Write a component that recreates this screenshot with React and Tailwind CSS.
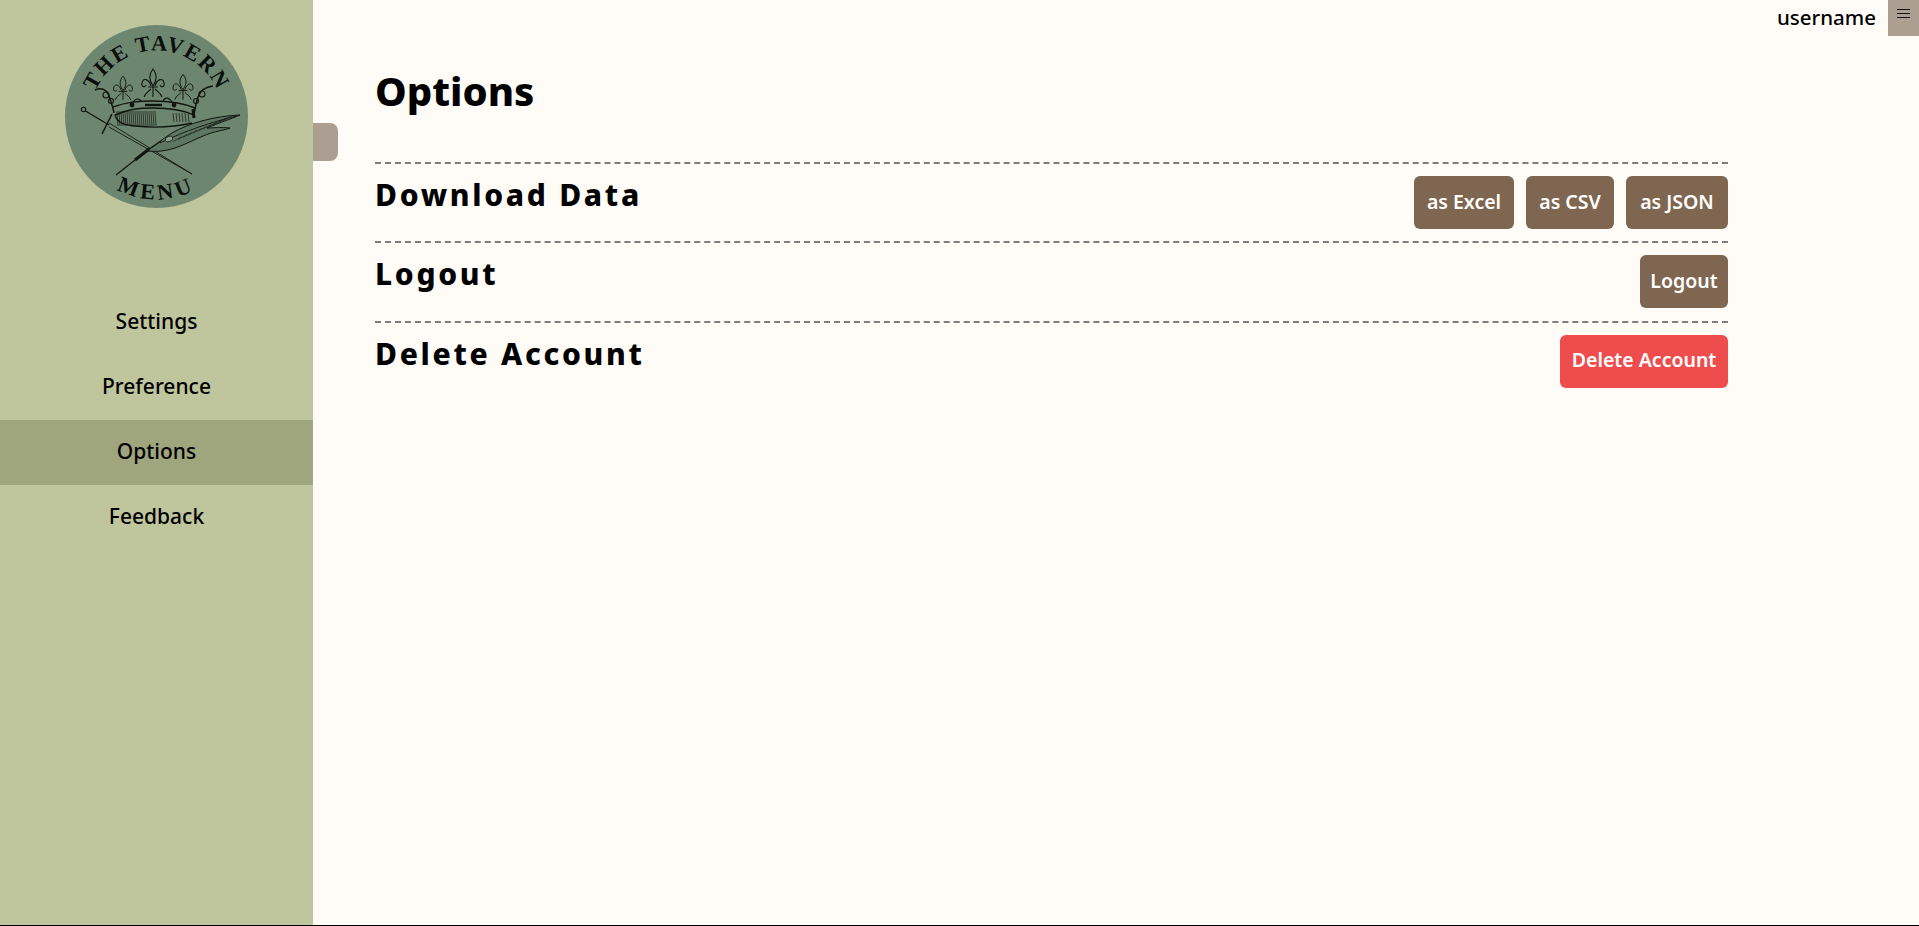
const navItems = ["Settings", "Preference", "Options", "Feedback"];

const sections = [
    {
        title: "Download Data",
        buttons: [
            { label: "as Excel", width: "w-[100px]" },
            { label: "as CSV", width: "w-[88px]" },
            { label: "as JSON", width: "w-[102px]" },
        ],
    },
    { title: "Logout", buttons: [{ label: "Logout", width: "w-[88px]" }] },
    { title: "Delete Account", buttons: [{ label: "Delete Account", width: "w-[168px]" }], danger: true },
];

// x positions of the hatch lines under the crown
const capHatch = [52, 54, 56, 58, 60, 62, 64, 66, 68, 70, 72, 74, 76, 78, 80, 82, 84, 86, 88, 90, 108, 111, 114, 117, 120, 123];
const featherHatch = [108, 113, 118, 123, 128, 133, 138, 143, 148, 153, 158];

function Fleur({ x, y, scale = 1 }) {
    return (
        <g transform={`translate(${x} ${y}) scale(${scale})`}>
            <path d="M0 -14 C4 -9 5 -4 0 3 C-5 -4 -4 -9 0 -14 Z" />
            <path d="M-2 3 C-4 -4 -10 -6 -11 0 C-12 4 -8 5 -7 2" />
            <path d="M2 3 C4 -4 10 -6 11 0 C12 4 8 5 7 2" />
            <path d="M-5 4 L5 4 M0 3 L0 14 M-2 6 C-5 9 -8 10 -9 14 M2 6 C5 9 8 10 9 14" />
        </g>
    );
}

function Logo() {
    return (
        <svg viewBox="0 0 183 183" className="w-[183px] h-[183px]">
            <defs>
                <path id="arc-top" d="M 25.5 91.5 A 66 66 0 0 1 157.5 91.5" />
                <path id="arc-bottom" d="M 8.5 91.5 A 83 83 0 0 0 174.5 91.5" />
            </defs>
            <circle cx="91.5" cy="91.5" r="91.5" fill="#6d8670" />
            <text fontFamily="'Liberation Serif', serif" fontWeight="700" fontSize="22" letterSpacing="1.5" fill="#0a0f0b">
                <textPath href="#arc-top" startOffset="50%" textAnchor="middle">THE TAVERN</textPath>
            </text>
            <text fontFamily="'Liberation Serif', serif" fontWeight="700" fontSize="22" letterSpacing="4" fill="#0a0f0b">
                <textPath href="#arc-bottom" startOffset="50%" textAnchor="middle">MENU</textPath>
            </text>

            {/* crown */}
            <g fill="none" stroke="#10160f" strokeWidth="1.1">
                <Fleur x={58} y={63} scale={0.85} />
                <Fleur x={88} y={58} />
                <Fleur x={118} y={62} scale={0.9} />
                <path d="M30 65 C37 62 42 65 44 71 C46 77 48 82 49 88" strokeWidth="1.5" />
                <path d="M148 61 C140 62 135 66 133 72 C131 78 130 84 129 90" strokeWidth="1.5" />
                <circle cx="41" cy="70" r="3" />
                <circle cx="46" cy="76" r="2.5" />
                <circle cx="137" cy="69" r="3" />
                <circle cx="131" cy="76" r="2.5" />
                <path d="M48 82 C62 77 72 76 88 76 C104 76 118 78 130 83" strokeWidth="1.4" />
                <path d="M50 90 C64 84 74 83 88 83 C104 83 118 85 129 90" strokeWidth="1.4" />
                <path d="M68 78 C70 73 74 73 76 76 M98 76 C100 72 104 72 107 77" />
                <path d="M50 90 C52 98 60 100 70 101 C90 103 110 102 127 98" strokeWidth="1.3" />
                {capHatch.map((x) => (
                    <path key={x} d={`M${x} ${x < 95 ? 86 : 88} L${x + 1} ${x < 95 ? 101 : 97}`} strokeWidth="0.7" />
                ))}
            </g>
            <circle cx="67" cy="80" r="2.4" fill="#10160f" />
            <circle cx="109" cy="80" r="2.4" fill="#10160f" />
            <path d="M80 80 L97 80" stroke="#10160f" strokeWidth="2.4" />
            <path d="M128 84 L129 93" stroke="#10160f" strokeWidth="3" />

            {/* sword */}
            <g fill="none" stroke="#10160f">
                <circle cx="18.5" cy="84.5" r="2.2" strokeWidth="1.1" />
                <path d="M20.5 86 L44 100" strokeWidth="1.4" />
                <path d="M44 98 L127 149 L44 102" strokeWidth="0.9" />
                <path d="M47 89 L37 109" strokeWidth="1.5" />
            </g>

            {/* feather */}
            <path d="M175 90 C150 91 124 98 107 108 C96 115 88 122 82 126 C92 127 100 126 110 123 C124 118 134 112 146 108 C152 106 160 105 165 103 C156 102 148 103 142 103 C153 98 166 94 175 90 Z" fill="#5e7762" stroke="#10160f" strokeWidth="1" />
            <g fill="none" stroke="#10160f" strokeWidth="0.6">
                <path d="M95 118 C120 106 146 97 172 91" strokeWidth="0.9" />
                {featherHatch.map((x) => (
                    <path key={x} d={`M${x} ${120 - (x - 100) * 0.42} L${x + 9} ${115 - (x - 100) * 0.42}`} />
                ))}
            </g>
            <ellipse cx="104" cy="114" rx="4" ry="2.5" fill="#86a08c" stroke="#10160f" strokeWidth="0.7" transform="rotate(-25 104 114)" />
            <path d="M51 150 L70 135" stroke="#10160f" strokeWidth="1.2" />
            <path d="M70 135 L84 124" stroke="#10160f" strokeWidth="3" />
            <path d="M84 124 L96 116" stroke="#10160f" strokeWidth="1.4" />
        </svg>
    );
}

function App() {
    return (
        <div className="h-[926px] flex flex-col bg-[#fffcf8] font-['Noto_Sans',sans-serif] text-black">
            <div className="flex-1 flex min-h-0">
                <aside className="w-[313px] shrink-0 bg-[#bfc69d] flex flex-col">
                    <div className="pt-[25px] flex justify-center">
                        <Logo />
                    </div>
                    <nav className="mt-[82px]">
                        {navItems.map((item) => (
                            <div
                                key={item}
                                className={`h-[65px] pb-[2px] flex items-center justify-center text-[21px] font-medium ${item === "Options" ? "bg-[#9fa57d]" : ""}`}
                            >
                                {item}
                            </div>
                        ))}
                    </nav>
                </aside>

                <div className="flex-1 relative">
                    {/* sidebar toggle */}
                    <div className="absolute left-0 top-[123px] w-[25px] h-[38px] bg-[#ac9e90] rounded-r-lg"></div>

                    <header className="flex justify-end items-start h-[36px]">
                        <span className="text-[20.5px] font-medium leading-[34px] mr-[12px]">username</span>
                        <button className="w-[31px] h-[36px] bg-[#ac9e90] flex justify-center pt-[9px]">
                            <svg width="13" height="9" viewBox="0 0 13 9" stroke="#111" strokeWidth="1">
                                <path d="M0 .5H13M0 4.5H13M0 8.5H13" />
                            </svg>
                        </button>
                    </header>

                    <main className="ml-[62px] w-[1353px]">
                        <h1 className="text-[40px] font-extrabold leading-[54px] mt-[28px] mb-[44px]">Options</h1>

                        {sections.map((section) => (
                            <section
                                key={section.title}
                                className="h-[79.3px] border-t-2 border-dashed border-[#7d7d7d] flex justify-between items-start"
                            >
                                <h2 className="text-[30px] font-extrabold tracking-[0.09em] leading-[40px] mt-[11px]">
                                    {section.title}
                                </h2>
                                <div className="flex gap-3 mt-[12px]">
                                    {section.buttons.map((button) => (
                                        <button
                                            key={button.label}
                                            className={`h-[53px] pb-[2px] rounded-md text-white text-[19.5px] font-semibold ${button.width} ${section.danger ? "bg-[#ef4d4d]" : "bg-[#7f6650]"}`}
                                        >
                                            {button.label}
                                        </button>
                                    ))}
                                </div>
                            </section>
                        ))}
                    </main>
                </div>
            </div>
            <div className="h-px bg-black"></div>
        </div>
    );
}

export default App;
